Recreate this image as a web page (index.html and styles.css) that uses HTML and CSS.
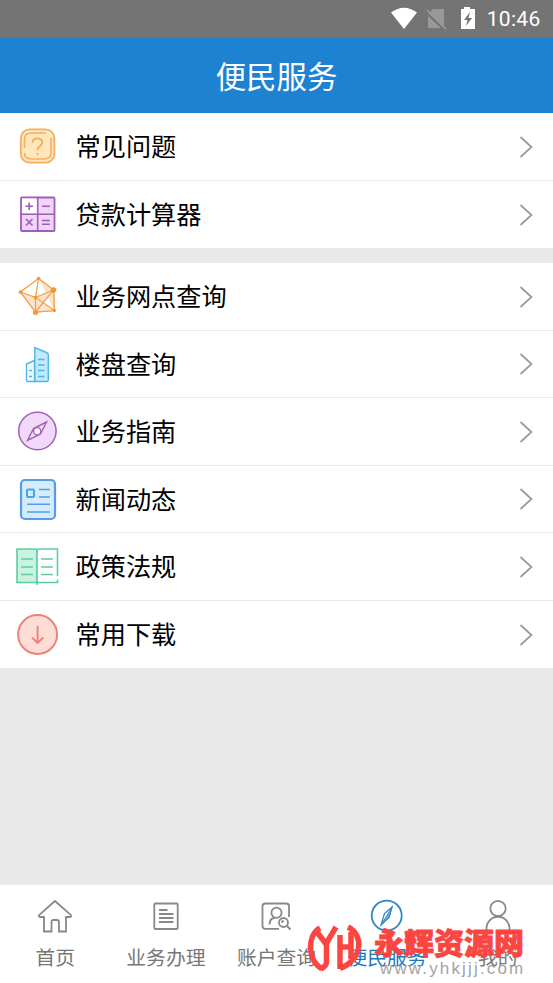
FILE: index.html
```html
<!DOCTYPE html>
<html lang="zh-CN">
<head>
<meta charset="utf-8">
<title>便民服务</title>
<link rel="stylesheet" href="styles.css">
</head>
<body>
<div class="screen">
  <div class="status">
    <svg class="status-icons" viewBox="0 0 90 37">
      <path fill="#fff" d="M1 12.500Q14 3 27 12.500L14 29Z"/>
      <path fill="#999" d="M43 9H54V28L38.500 13.500ZM38 16L51 28H38Z"/>
      <path stroke="#999" stroke-width="1.700" d="M37 10L56 29"/>
      <path fill="#fff" d="M71 9H74V7H80V9H85V29H71Z"/>
      <path fill="#747474" d="M80 12L74 20H77.500L76 26L82 18H78.500Z"/>
    </svg>
    <span class="clock">10:46</span>
  </div>
  <header class="header">便民服务</header>
  <main class="content">
    <section class="group">
      <a class="row">
        <svg class="icon" viewBox="0 0 76 67" stroke="#f3ae62">
          <rect x="20.800" y="16.300" width="33.600" height="33.400" rx="9" fill="#ffe6bd" stroke-width="1.800"/>
          <path d="M24.500 35V26Q24.500 20 31 20H46M51 25V40Q51 46 44 46H31Q24.500 46 24.500 40" stroke-width="1.600"/>
          <path d="M32.500 30Q32.500 25.500 37.300 25.500T42.300 29.500C42.300 33 37.500 33 37.500 37M37.500 40V42" stroke-width="1.800"/>
        </svg>
        <span class="label">常见问题</span><svg class="arrow" viewBox="0 0 14 24"><path d="M1.500 2L12.500 12L1.500 22"/></svg></a>
      <a class="row">
        <svg class="icon" viewBox="0 0 76 67" stroke="#a35abd">
          <rect x="21" y="16.500" width="33.500" height="33.500" rx="1" fill="#eed5fa" stroke-width="1.800"/>
          <path fill="#fff" stroke="none" d="M22 17.500H37V32.500H22Z"/>
          <path stroke-width="1.600" d="M37.700 17V50M21 33.200H54M25.500 25.200H33M29.200 21.500V29M42 25.200H50M26 38L32.500 44.500M32.500 38L26 44.500M42 39.500H50M42 43.300H50"/>
        </svg>
        <span class="label">贷款计算器</span><svg class="arrow" viewBox="0 0 14 24"><path d="M1.500 2L12.500 12L1.500 22"/></svg></a>
    </section>
    <section class="group">
      <a class="row">
        <svg class="icon" viewBox="0 0 76 67" stroke="#f2a04f">
          <path fill="#fff" stroke-width="1.300" d="M38.500 15.500L20.500 29L35.500 49L54.500 47.500L53.500 27Z"/>
          <path fill="#fbe3cd" stroke-width="1.200" d="M35.500 34.500L53.500 27L54.500 47.500L35.500 49ZM20.500 29L35.500 34.500L35.500 49ZM38.500 15.500L35.500 34.500L54.500 47.500M38.500 15.500L53.500 27L35.500 49"/>
          <g fill="#f5962f" stroke="none"><circle cx="38.500" cy="15.500" r="1.800"/><circle cx="20.500" cy="29" r="1.800"/><circle cx="53.500" cy="27" r="2.800"/><circle cx="35.500" cy="49.500" r="2.500"/><circle cx="54.300" cy="47.500" r="1.700"/><circle cx="35.500" cy="34.500" r="1.800"/></g>
        </svg>
        <span class="label">业务网点查询</span><svg class="arrow" viewBox="0 0 14 24"><path d="M1.500 2L12.500 12L1.500 22"/></svg></a>
      <a class="row">
        <svg class="icon" viewBox="0 0 76 67" stroke="#53b5e6">
          <path fill="#eefaff" stroke-width="1.400" d="M34.500 29.500L26.500 33V49Q26.500 50.500 28 50.500H34.500Z"/>
          <path fill="#bfe9fc" stroke-width="1.400" d="M34.800 50.500V16.500L46.500 21.500Q48.300 22.300 48.300 24V49Q48.300 50.500 47 50.500Z"/>
          <path stroke-width="1.400" d="M38 28.500H44.500M38 34H44.500M38 39.500H44.500M38 45.500H44.500M29 39.500H32M29 45.500H32"/>
        </svg>
        <span class="label">楼盘查询</span><svg class="arrow" viewBox="0 0 14 24"><path d="M1.500 2L12.500 12L1.500 22"/></svg></a>
      <a class="row">
        <svg class="icon" viewBox="0 0 76 67" stroke="#a35fb8">
          <circle cx="37.400" cy="33" r="18.700" fill="#f1d9fa" stroke-width="1.500"/>
          <path stroke-width="1.400" d="M46.500 24L33.500 30.500L27.500 42.500L40.500 36Z"/>
          <circle cx="37.200" cy="33.300" r="3.600" fill="#fff" stroke-width="1.300"/>
        </svg>
        <span class="label">业务指南</span><svg class="arrow" viewBox="0 0 14 24"><path d="M1.500 2L12.500 12L1.500 22"/></svg></a>
      <a class="row">
        <svg class="icon" viewBox="0 0 76 67" stroke="#579ce2">
          <rect x="21" y="14" width="34" height="39" rx="4" fill="#d5ecff" stroke-width="2.200"/>
          <rect x="27" y="23.500" width="7" height="7.500" rx="1" stroke="#42a8ea" stroke-width="2"/>
          <path stroke-width="1.500" d="M39 23.500H50M39 31H50M27 38.300H50M27 46H50"/>
        </svg>
        <span class="label">新闻动态</span><svg class="arrow" viewBox="0 0 14 24"><path d="M1.500 2L12.500 12L1.500 22"/></svg></a>
      <a class="row">
        <svg class="icon" viewBox="0 0 76 67" stroke="#5fcba4">
          <path fill="#c9f3df" stroke-width="1.600" d="M17 16H35Q37 16 37 18V49.500H17Z"/>
          <path fill="#fff" stroke-width="1.600" d="M57.500 43V16H39Q37 16 37 18V49.500H57.500V46.500"/>
          <path stroke-width="1.500" d="M21 26H33M21 34H33M21 41.500H33M41 26H53M41 34H53M41 41.500H53M37 48V52"/>
        </svg>
        <span class="label">政策法规</span><svg class="arrow" viewBox="0 0 14 24"><path d="M1.500 2L12.500 12L1.500 22"/></svg></a>
      <a class="row">
        <svg class="icon" viewBox="0 0 76 67" stroke="#ee8177">
          <circle cx="37.600" cy="33.500" r="19.500" fill="#ffddd7" stroke-width="1.900"/>
          <path stroke-width="1.900" d="M37.600 25V42M32 36.500L37.600 42L43.200 36.500"/>
        </svg>
        <span class="label">常用下载</span><svg class="arrow" viewBox="0 0 14 24"><path d="M1.500 2L12.500 12L1.500 22"/></svg></a>
    </section>
  </main>
  <nav class="tabs">
    <a class="tab"><svg viewBox="0 0 44 48"><path d="M22 16L6 30.200Q5.500 32 7.500 32H11V46.500H18.500V37Q18.500 35 20.500 35H24Q26 35 26 37V46.500H33V32H36.500Q38.500 32 38 30.200Z"/></svg><span>首页</span></a>
    <a class="tab"><svg viewBox="0 0 44 48"><rect x="10.300" y="18.500" width="23.400" height="25.500" rx="1"/><path d="M15 25H23.500M15 29H29.500M15 33H29.500M15 37H29.500"/></svg><span>业务办理</span></a>
    <a class="tab"><svg viewBox="0 0 44 48"><path d="M25 43.800H11.500Q8.500 43.800 8.500 41V21Q8.500 18.500 11.500 18.500H32Q35 18.500 35 21V32"/><circle cx="22.500" cy="27.700" r="5.100"/><path d="M15.500 39.500Q15.500 33 21 33"/><circle cx="29.500" cy="37.500" r="4.500"/><path d="M33 41L36.500 44.500M27.500 37.500L29.500 35.500"/></svg><span>账户查询</span></a>
    <a class="tab active"><svg viewBox="0 0 44 48"><circle cx="21.700" cy="30.600" r="15"/><path stroke-width="1.300" d="M27 22L19.500 28.500L16 40L24 32.500Z"/><path stroke-width="1" fill="#6faedb" d="M27 22L22 30.500L16 40L24 32.500Z"/></svg><span>便民服务</span></a>
    <a class="tab"><svg viewBox="0 0 44 48"><circle cx="22" cy="23.500" r="7.700"/><path d="M10.500 46C9 27 35 27 33.500 46"/></svg><span>我的</span></a>
  </nav>
  <div class="watermark">
    <svg class="mark" viewBox="0 0 56 50"><path d="M13 5C0 12 0 37 15 46M10 9L19 21L29 4M19.500 20V39Q19.500 43 14 46M33 12V46M33 24H44M41 4C57 12 56 36 33 45.500M44 9V36"/></svg>
    <div class="mark-text"><strong>永辉资源网</strong><small>www.yhkjjj.com</small></div>
  </div>
</div>
</body>
</html>
```
FILE: styles.css
```css
* { box-sizing: border-box; }
body { margin: 0; font-family: Roboto, "Noto Sans CJK SC", sans-serif; }
svg { fill: none; display: block; flex: none; }
.screen {
  position: relative;
  display: flex;
  flex-direction: column;
  width: 553px;
  height: 983px;
  overflow: hidden;
  background: #e9e9e9;
}
.status {
  display: flex;
  justify-content: flex-end;
  align-items: center;
  height: 37px;
  padding-right: 12.500px;
  background: #747474;
  color: #fff;
}
.status-icons { width: 90px; height: 37px; margin-right: 7px; }
.clock { font-size: 21px; line-height: 37px; letter-spacing: .3px; padding-top: 2px; }
.header {
  height: 76.400px;
  background: #1e82d2;
  color: #fff;
  font-size: 30.400px;
  line-height: 81px;
  text-align: center;
  font-weight: 400;
}
.content { flex: 1; }
.group { background: #fff; margin-bottom: 15px; }
.row {
  display: flex;
  align-items: center;
  height: 67.500px;
  padding-right: 20px;
  border-bottom: 1px solid #e8e8e8;
}
.row:last-child { border-bottom: 0; }
.icon { width: 76px; height: 67px; margin-right: -.5px; }
.label { flex: 1; font-size: 25.200px; line-height: 64px; padding-top: 3px; color: #000; }
.arrow { width: 14px; height: 24px; stroke: #999; stroke-width: 1.700; }
.tabs {
  display: flex;
  height: 98.500px;
  background: #fff;
}
.tab {
  flex: 1;
  display: flex;
  flex-direction: column;
  align-items: center;
  color: #777;
  font-size: 19.800px;
  line-height: 30px;
  white-space: nowrap;
}
.tab svg { width: 44px; height: 48px; margin-bottom: 11px; stroke: #888; stroke-width: 1.800; }
.tab.active { color: #1d78bd; }
.tab.active svg { stroke: #3287c5; }
.watermark {
  position: absolute;
  left: 307px;
  top: 923px;
  display: flex;
}
.mark { width: 56px; height: 50px; stroke: #fb4541; stroke-width: 5.500; margin-right: 11px; }
.mark-text { display: flex; flex-direction: column; padding-top: 3px; }
.mark-text strong {
  color: #fb4541;
  font-size: 30px;
  line-height: 35px;
  font-weight: 900;
  -webkit-text-stroke: .8px #fb4541;
}
.mark-text small {
  margin-left: 6px;
  font: 17px/15px "Liberation Sans", sans-serif;
  letter-spacing: 2.150px;
  color: #a3a3a3;
}
```
